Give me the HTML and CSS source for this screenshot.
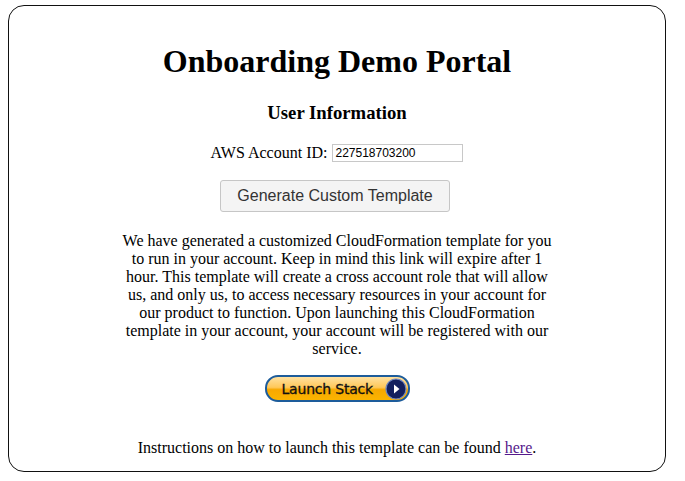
FILE: index.html
```html
<!DOCTYPE html>
<html>
<head>
<meta charset="utf-8">
<link rel="stylesheet" href="styles.css">
</head>
<body>
<div class="panel">
  <h1 class="title">Onboarding Demo Portal</h1>
  <h3 class="subtitle">User Information</h3>
  <div class="field">
    <label class="label">AWS Account ID:</label>
    <input class="input" type="text" value="227518703200">
  </div>
  <div class="btn-row">
    <button class="btn">Generate Custom Template</button>
  </div>
  <p class="desc">We have generated a customized CloudFormation template for you to run in your account. Keep in mind this link will expire after 1 hour. This template will create a cross account role that will allow us, and only us, to access necessary resources in your account for our product to function. Upon launching this CloudFormation template in your account, your account will be registered with our service.</p>
  <div class="launch-row">
    <a class="launch" href="#">
      <span class="launch-text">Launch Stack</span>
      <span class="launch-icon">
        <svg width="22" height="22" viewBox="0 0 22 22">
          <circle cx="11" cy="11" r="10" fill="#13205e" stroke="#6e86c0" stroke-width="1.2"/>
          <path d="M9 6.5 L14.5 11 L9 15.5 Z" fill="#ffffff"/>
        </svg>
      </span>
    </a>
  </div>
  <p class="footer">Instructions on how to launch this template can be found <a class="link" href="#">here</a>.</p>
</div>
</body>
</html>
```
FILE: styles.css
```css
html, body {
  margin: 0;
  padding: 0;
  background: #ffffff;
}
body {
  padding: 5px 18px 8px 8px;
  font-family: "Liberation Serif", "Times New Roman", serif;
  color: #000;
}
.panel {
  width: 656px;
  height: 465px;
  border: 1px solid #111;
  border-radius: 16px;
  display: flex;
  flex-direction: column;
  align-items: center;
  box-sizing: content-box;
}
.title {
  margin: 37px 0 0 0;
  font-size: 32px;
  line-height: 37px;
  font-weight: bold;
}
.subtitle {
  margin: 22px 0 0 0;
  font-size: 18.72px;
  line-height: 22px;
  font-weight: bold;
}
.field {
  margin-top: 19px;
  display: flex;
  align-items: center;
  gap: 5px;
  font-size: 16px;
  line-height: 19px;
}
.input {
  width: 125px;
  height: 14px;
  padding: 1px 2px;
  border: 1px solid #c8c8c8;
  font-family: "Liberation Sans", Arial, sans-serif;
  font-size: 12px;
  color: #000;
  margin-top: 1px;
}
.btn-row {
  margin-top: 18px;
  padding-right: 4px;
}
.btn {
  width: 230px;
  height: 32px;
  background: #f4f4f4;
  border: 1px solid #c6c6c6;
  border-radius: 3px;
  font-family: "Liberation Sans", Arial, sans-serif;
  font-size: 16px;
  color: #333;
  padding: 0;
}
.desc {
  width: 440px;
  margin: 20px 0 0 0;
  text-align: center;
  font-size: 16px;
  line-height: 18px;
}
.launch-row {
  margin-top: 17px;
  display: flex;
}
.launch {
  width: 125px;
  height: 23px;
  border: 2px solid #1d5c9b;
  border-radius: 13px;
  background: linear-gradient(#ffe1a0 0%, #ffc85a 45%, #f7a800 55%, #fbb400 100%);
  display: flex;
  align-items: center;
  justify-content: space-between;
  padding: 0 1px 0 15px;
  box-sizing: content-box;
  text-decoration: none;
}
.launch-text {
  font-family: "DejaVu Sans", Verdana, sans-serif;
  font-size: 14px;
  color: #111;
  letter-spacing: -0.2px;
  -webkit-text-stroke: 0.3px #111;
}
.launch-icon {
  display: flex;
}
.footer {
  margin: 36px 0 0 0;
  font-size: 16px;
  line-height: 19px;
}
.link {
  color: #551a8b;
}
```
